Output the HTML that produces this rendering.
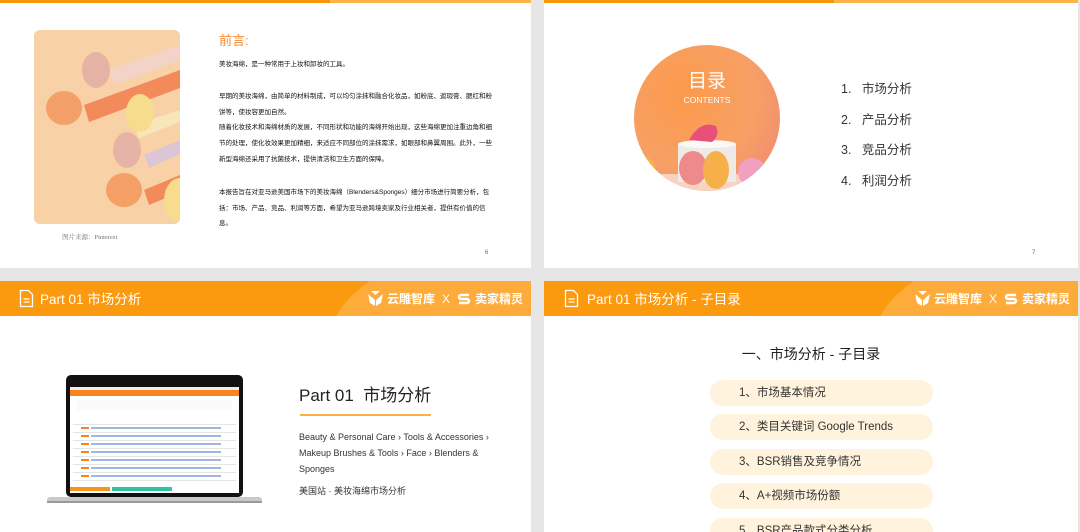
<!DOCTYPE html>
<html><head><meta charset="utf-8"><style>
*{margin:0;padding:0;box-sizing:border-box}
body{width:1080px;height:532px;background:#e6e6e6;position:relative;overflow:hidden;font-family:"Liberation Sans","Noto Sans CJK SC",sans-serif;color:#333}
.s{position:absolute;background:#fff;overflow:hidden}
.abs{position:absolute}
.hdr{position:absolute;left:0;top:0;right:0;height:35px;background:#fb9a0f;overflow:hidden}
.hdr .arc{position:absolute;left:330px;top:-40px;width:400px;height:200px;border-radius:50%;background:#fdab3a}
.ht{position:absolute;left:40px;top:7px;color:#fff;font-size:13.5px}
.logo{position:absolute;right:8px;top:9px;color:#fff;font-size:12px;font-weight:bold;display:flex;align-items:center;gap:4px}
.pill{position:absolute;left:166px;width:223px;height:26px;border-radius:13px;background:#fff3dd;font-size:11.5px;padding-left:29px;line-height:26px;color:#333}
.p{font-size:6.5px;line-height:15.7px;color:#111}
</style></head><body>

<div class="s" style="left:0;top:0;width:531px;height:268px">
 <div class="abs" style="left:0;top:0;width:330px;height:3px;background:#f9950a"></div>
 <div class="abs" style="left:330px;top:0;width:201px;height:3px;background:#fcb34a"></div>
 <svg class="abs" style="left:34px;top:30px" width="146" height="194" viewBox="0 0 146 194">
  <defs><clipPath id="c1"><rect width="146" height="194" rx="6"/></clipPath></defs>
  <g clip-path="url(#c1)">
   <rect width="146" height="194" fill="#f8d2a6"/>
   <polygon points="75,40 146,15 146,30 80,55" fill="#f3d3c8"/>
   <polygon points="50,75 146,40 146,58 55,92" fill="#f28a5b"/>
   <polygon points="100,95 146,80 146,92 105,108" fill="#f9e6b8"/>
   <polygon points="110,125 146,110 146,124 115,138" fill="#dcc6d6"/>
   <polygon points="110,160 146,145 146,162 115,175" fill="#f28a5b"/>
   <ellipse cx="62" cy="40" rx="14" ry="18" fill="#e4b3a3"/>
   <ellipse cx="30" cy="78" rx="18" ry="17" fill="#f3a06a"/>
   <ellipse cx="106" cy="83" rx="14" ry="19" fill="#f6dd8e"/>
   <ellipse cx="93" cy="120" rx="14" ry="18" fill="#e6b4a6"/>
   <ellipse cx="90" cy="160" rx="18" ry="17" fill="#f4a066"/>
   <ellipse cx="146" cy="170" rx="16" ry="22" fill="#f6dc8c"/>
  </g>
 </svg>
 <div class="abs" style="left:62px;top:232px;font-size:6.5px;color:#777;font-family:'Liberation Serif','Noto Serif CJK SC',serif">图片来源：Pinterest</div>
 <div class="abs" style="left:219px;top:30px;font-size:13px;color:#f08b3a">前言:</div>
 <div class="abs p" style="left:219px;top:57px;width:273px">美妆海绵，是一种常用于上妆和卸妆的工具。</div>
 <div class="abs p" style="left:219px;top:89px;width:273px">早期的美妆海绵，由简单的材料制成，可以均匀涂抹和融合化妆品，如粉底、遮瑕膏、腮红和粉饼等，使妆容更加自然。<br>随着化妆技术和海绵材质的发展，不同形状和功能的海绵开始出现，这些海绵更加注重边角和细节的处理，使化妆效果更加精细，来适应不同部位的涂抹需求，如眼部和鼻翼周围。此外，一些新型海绵还采用了抗菌技术，提供清洁和卫生方面的保障。</div>
 <div class="abs p" style="left:219px;top:185px;width:273px">本报告旨在对亚马逊美国市场下的美妆海绵（Blenders&amp;Sponges）细分市场进行简要分析，包括：市场、产品、竞品、利润等方面，希望为亚马逊跨境卖家及行业相关者，提供有价值的信息。</div>
 <div class="abs" style="left:485px;top:250px;font-size:6px;color:#666">6</div>
</div>

<div class="s" style="left:544px;top:0;width:534px;height:268px">
 <div class="abs" style="left:0;top:0;width:290px;height:3px;background:#f9950a"></div>
 <div class="abs" style="left:290px;top:0;width:244px;height:3px;background:#fcb34a"></div>
 <svg class="abs" style="left:90px;top:44px" width="146" height="150" viewBox="0 0 146 150">
  <defs>
   <clipPath id="c2"><circle cx="73" cy="74" r="73"/></clipPath>
   <radialGradient id="g2" cx="0.35" cy="0.35" r="0.8"><stop offset="0" stop-color="#fb9a4a"/><stop offset="0.6" stop-color="#f7a066"/><stop offset="1" stop-color="#f08a70"/></radialGradient>
  </defs>
  <g clip-path="url(#c2)">
   <rect width="146" height="150" fill="url(#g2)"/>
   <rect x="0" y="130" width="146" height="20" fill="#f6d4c0"/>
   <rect x="44" y="100" width="58" height="38" fill="#eeeae8"/>
   <ellipse cx="73" cy="100" rx="29" ry="4" fill="#fbf8f6"/>
   <path d="M55 96 Q66 76 82 82 Q86 92 78 98 Z" fill="#e8507a"/>
   <ellipse cx="59" cy="124" rx="14" ry="17" fill="#ee8a8a"/>
   <ellipse cx="82" cy="126" rx="13" ry="19" fill="#f6b04a"/>
   <ellipse cx="118" cy="128" rx="14" ry="14" fill="#f2a0c0"/>
   <ellipse cx="12" cy="128" rx="10" ry="14" fill="#f7b540"/>
  </g>
 </svg>
 <div class="abs" style="left:90px;top:66px;width:146px;text-align:center;color:#fff;font-size:19px">目录</div>
 <div class="abs" style="left:90px;top:95px;width:146px;text-align:center;color:#fff;font-size:8.5px">CONTENTS</div>
 <div class="abs" style="left:297px;top:74px;font-size:12.5px;line-height:30.5px;color:#333">
  1.&nbsp;&nbsp;&nbsp;市场分析<br>2.&nbsp;&nbsp;&nbsp;产品分析<br>3.&nbsp;&nbsp;&nbsp;竞品分析<br>4.&nbsp;&nbsp;&nbsp;利润分析</div>
 <div class="abs" style="left:488px;top:250px;font-size:6px;color:#666">7</div>
</div>

<div class="s" style="left:0;top:281px;width:531px;height:251px">
 <div class="hdr"><div class="arc"></div>
  <svg class="abs" style="left:19px;top:8px" width="15" height="19" viewBox="0 0 15 19" fill="none" stroke="#fff" stroke-width="1.3"><path d="M1.5 1.5h8l4 4v12h-12z"/><path d="M4.5 10h6M4.5 13h6"/></svg>
  <div class="ht">Part 01 市场分析</div>
  <div class="logo"><svg width="15" height="15" viewBox="0 0 15 15" fill="#fff"><path d="M0 3l7 6v6l-5-3z M15 3l-7 6v6l5-3z M3 0l4.5 4L12 0z"/></svg>云雕智库 <span style="font-weight:normal;margin:0 3px">X</span><svg width="14" height="14" viewBox="0 0 14 14" fill="none" stroke="#fff" stroke-width="2.5"><path d="M12 3H4a2 2 0 0 0 0 4h6a2 2 0 0 1 0 4H2"/></svg>卖家精灵</div>
 </div>
 <svg class="abs" style="left:47px;top:94px" width="215" height="130" viewBox="0 0 215 130">
  <rect x="19" y="0" width="177" height="122" rx="5" fill="#111"/>
  <rect x="23" y="12" width="169" height="106" fill="#fff"/>
  <rect x="23" y="12" width="169" height="3" fill="#eee"/>
  <rect x="23" y="15" width="169" height="6" fill="#f7841e"/>
  <rect x="30" y="25" width="155" height="10" fill="#fafafa"/>
  <g fill="#e5e5e5">
   <rect x="26" y="49" width="163" height="1"/><rect x="26" y="57" width="163" height="1"/><rect x="26" y="65" width="163" height="1"/><rect x="26" y="73" width="163" height="1"/><rect x="26" y="81" width="163" height="1"/><rect x="26" y="89" width="163" height="1"/><rect x="26" y="97" width="163" height="1"/><rect x="26" y="105" width="163" height="1"/>
  </g>
  <g fill="#f57f2a"><rect x="34" y="52" width="8" height="2"/><rect x="34" y="60" width="8" height="2"/><rect x="34" y="68" width="8" height="2"/><rect x="34" y="76" width="8" height="2"/><rect x="34" y="84" width="8" height="2"/><rect x="34" y="92" width="8" height="2"/><rect x="34" y="100" width="8" height="2"/></g>
  <g fill="#9bb9e0"><rect x="44" y="52" width="130" height="2"/><rect x="44" y="60" width="130" height="2"/><rect x="44" y="68" width="130" height="2"/><rect x="44" y="76" width="130" height="2"/><rect x="44" y="84" width="130" height="2"/><rect x="44" y="92" width="130" height="2"/><rect x="44" y="100" width="130" height="2"/></g>
  <rect x="23" y="112" width="40" height="4" fill="#f7941e"/><rect x="65" y="112" width="60" height="4" fill="#2ec4a0"/>
  <rect x="0" y="122" width="215" height="6" rx="3" fill="#c9c9cc"/>
  <rect x="0" y="126" width="215" height="2" fill="#999"/>
 </svg>
 <div class="abs" style="left:299px;top:100px;font-size:17px;color:#222">Part 01&nbsp; 市场分析</div>
 <div class="abs" style="left:300px;top:133px;width:131px;height:2px;background:#fbb040"></div>
 <div class="abs" style="left:299px;top:148px;width:200px;font-size:9px;line-height:16px;color:#333">Beauty &amp; Personal Care › Tools &amp; Accessories › Makeup Brushes &amp; Tools › Face › Blenders &amp; Sponges</div>
 <div class="abs" style="left:299px;top:203px;font-size:9px;color:#333">美国站 · 美妆海绵市场分析</div>
</div>

<div class="s" style="left:544px;top:281px;width:534px;height:251px">
 <div class="hdr"><div class="arc"></div>
  <svg class="abs" style="left:20px;top:8px" width="15" height="19" viewBox="0 0 15 19" fill="none" stroke="#fff" stroke-width="1.3"><path d="M1.5 1.5h8l4 4v12h-12z"/><path d="M4.5 10h6M4.5 13h6"/></svg>
  <div class="ht" style="left:43px">Part 01 市场分析 - 子目录</div>
  <div class="logo"><svg width="15" height="15" viewBox="0 0 15 15" fill="#fff"><path d="M0 3l7 6v6l-5-3z M15 3l-7 6v6l5-3z M3 0l4.5 4L12 0z"/></svg>云雕智库 <span style="font-weight:normal;margin:0 3px">X</span><svg width="14" height="14" viewBox="0 0 14 14" fill="none" stroke="#fff" stroke-width="2.5"><path d="M12 3H4a2 2 0 0 0 0 4h6a2 2 0 0 1 0 4H2"/></svg>卖家精灵</div>
 </div>
 <div class="abs" style="left:0;width:534px;top:63px;text-align:center;font-size:14px;color:#222">一、市场分析 - 子目录</div>
 <div class="pill" style="top:99px">1、市场基本情况</div>
 <div class="pill" style="top:133px">2、类目关键词 Google Trends</div>
 <div class="pill" style="top:168px">3、BSR销售及竞争情况</div>
 <div class="pill" style="top:202px">4、A+视频市场份额</div>
 <div class="pill" style="top:237px">5、BSR产品款式分类分析</div>
</div>
</body></html>
